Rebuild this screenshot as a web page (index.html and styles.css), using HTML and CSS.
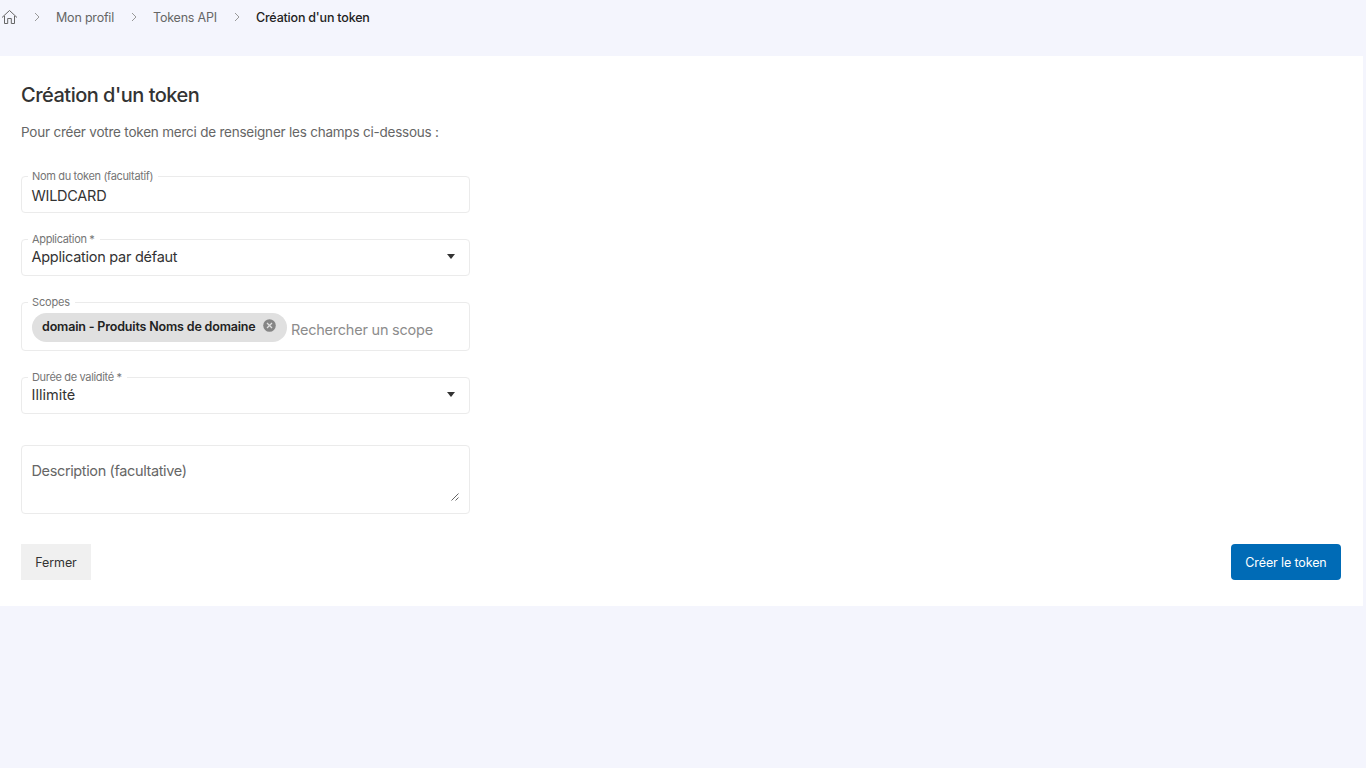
FILE: index.html
```html
<!DOCTYPE html>
<html lang="fr">
<head>
    <meta charset="UTF-8">
    <meta name="viewport" content="width=device-width, initial-scale=1.0">
    <title>Création d'un token</title>
    <link rel="stylesheet" href="styles.css">
</head>
<body>
    <nav class="breadcrumb">
        <svg class="home" width="16" height="16" viewBox="0 0 16 16">
            <path d="M1 8.5L8.5 1.5L16 8.5M3.5 7V14.5H6.7V9.5H10.3V14.5H13.5V7"/>
        </svg>
        <svg class="chevron" width="6" height="10" viewBox="0 0 6 10"><path d="M1 1L5 5L1 9"/></svg>
        <a class="crumb crumb-profile">Mon profil</a>
        <svg class="chevron" width="6" height="10" viewBox="0 0 6 10"><path d="M1 1L5 5L1 9"/></svg>
        <a class="crumb crumb-tokens">Tokens API</a>
        <svg class="chevron" width="6" height="10" viewBox="0 0 6 10"><path d="M1 1L5 5L1 9"/></svg>
        <span class="crumb current">Création d'un token</span>
    </nav>
    <main class="card">
        <h1 class="title">Création d'un token</h1>
        <p class="intro">Pour créer votre token merci de renseigner les champs ci-dessous :</p>
        <form class="form">
            <div class="field field-name">
                <label class="label">Nom du token (facultatif)</label>
                <span class="value">WILDCARD</span>
            </div>
            <div class="field field-app">
                <label class="label">Application *</label>
                <span class="value">Application par défaut</span>
                <span class="arrow"></span>
            </div>
            <div class="field field-scopes">
                <label class="label">Scopes</label>
                <div class="chip">
                    <span class="chip-text">domain - Produits Noms de domaine</span>
                    <svg width="13" height="13" viewBox="0 0 13 13">
                        <circle cx="6.5" cy="6.5" r="6.3" fill="#858585"/>
                        <path d="M4 4L9 9M9 4L4 9" stroke="#e0e0e0" stroke-width="1.3"/>
                    </svg>
                </div>
                <span class="placeholder">Rechercher un scope</span>
            </div>
            <div class="field field-duration">
                <label class="label">Durée de validité *</label>
                <span class="value">Illimité</span>
                <span class="arrow"></span>
            </div>
            <div class="field field-description">
                <span class="description">Description (facultative)</span>
                <svg class="resize" width="8" height="8" viewBox="0 0 8 8"><path d="M0.5 7.5L7.5 0.5M4.5 7.5L7.5 4.5"/></svg>
            </div>
        </form>
        <div class="actions">
            <button class="btn btn-close">Fermer</button>
            <button class="btn btn-create">Créer le token</button>
        </div>
    </main>
</body>
</html>
```
FILE: styles.css
```css
* {
    box-sizing: border-box;
}
body {
    margin: 0;
    height: 100vh;
    overflow: hidden;
    font-family: Inter, "Liberation Sans", sans-serif;
    color: #333;
    background-color: #f4f5fd;
}
.breadcrumb {
    display: flex;
    align-items: center;
    height: 34px;
    margin-bottom: 22px;
    padding-left: 1px;
}
.breadcrumb svg {
    fill: none;
    stroke: #666;
    flex: none;
}
.breadcrumb .chevron {
    stroke: #999;
    margin: 0 16px 0 17px;
}
.crumb {
    font-size: 12.5px;
    letter-spacing: -0.2px;
    color: #666;
    white-space: nowrap;
}
.crumb-profile {
    width: 58px;
}
.crumb-tokens {
    width: 64px;
}
.current {
    color: #222;
    font-weight: 500;
}
.card {
    width: 1363px;
    height: 550px;
    padding: 27px 22px 26px 21px;
    background-color: #fff;
}
.title {
    margin: 0;
    font-size: 20px;
    line-height: 24px;
    font-weight: 500;
    letter-spacing: -0.5px;
    white-space: nowrap;
}
.intro {
    margin: 15px 0 34px;
    font-size: 13.5px;
    line-height: 20px;
    letter-spacing: -0.22px;
    color: #666;
    white-space: nowrap;
}
.form {
    width: 449px;
}
.field {
    position: relative;
    display: flex;
    align-items: center;
    height: 37px;
    padding: 0 14px 0 9.5px;
    border: 1px solid #ebebeb;
    border-radius: 4px;
    white-space: nowrap;
}
.label {
    position: absolute;
    top: -8px;
    left: 6px;
    padding: 0 5px 0 4px;
    font-size: 11px;
    line-height: 14px;
    letter-spacing: -0.34px;
    color: #757575;
    background-color: #fff;
}
.value {
    flex: 1;
    font-size: 14.5px;
    line-height: 20px;
    letter-spacing: -0.26px;
}
.field-name {
    margin-bottom: 26px;
    padding-top: 3px;
}
.field-app {
    margin-bottom: 26px;
}
.field-app .value,
.field-duration .value {
    margin-bottom: 2px;
}
.field-duration .value {
    letter-spacing: 0;
}
.field-scopes {
    height: 49px;
    margin-bottom: 26px;
    padding-left: 10px;
}
.field-scopes .label {
    letter-spacing: -0.15px;
}
.field-duration {
    margin-bottom: 31px;
}
.field-description {
    height: 69px;
    justify-content: space-between;
    padding: 15px 10px 12px 9.5px;
    align-items: flex-start;
}
.arrow {
    margin-bottom: 3px;
    border: 4.5px solid transparent;
    border-top: 5px solid #333;
    border-bottom: 0;
}
.chip {
    display: flex;
    align-items: center;
    gap: 7px;
    width: 255px;
    height: 29px;
    margin-top: 1px;
    padding: 0 10px;
    border-radius: 15px;
    background-color: #e0e0e0;
}
.chip svg {
    flex: none;
    margin-bottom: 3px;
}
.chip-text {
    width: 214px;
    margin-bottom: 1px;
    font-size: 12.5px;
    font-weight: 600;
    letter-spacing: -0.17px;
    color: #222;
}
.placeholder {
    margin: 6px 0 0 4px;
    font-size: 14.5px;
    letter-spacing: -0.22px;
    color: #8c8c8c;
}
.description {
    font-size: 14.5px;
    line-height: 20px;
    letter-spacing: -0.37px;
    color: #666;
}
.resize {
    align-self: flex-end;
    fill: none;
    stroke: #666;
}
.actions {
    display: flex;
    justify-content: space-between;
    margin-top: 30px;
}
.btn {
    height: 36px;
    padding: 0;
    border: none;
    font-family: inherit;
    font-size: 12.5px;
    letter-spacing: -0.12px;
    cursor: pointer;
}
.btn-close {
    width: 70px;
    color: #333;
    background-color: #f0f0f0;
}
.btn-create {
    width: 110px;
    border-radius: 4px;
    color: #fff;
    background-color: #006bb6;
}
```
